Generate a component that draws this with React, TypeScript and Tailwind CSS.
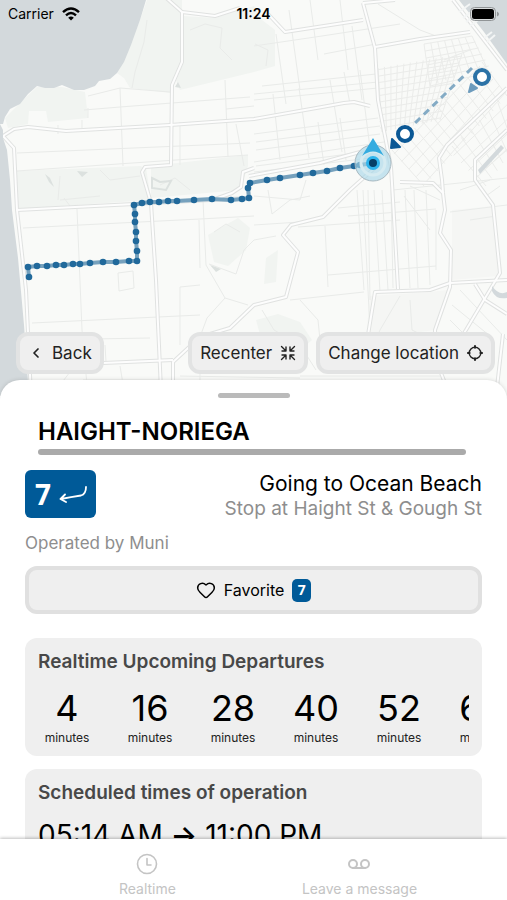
import { ChevronLeft, Heart, Voicemail } from 'lucide-react';
import type { ReactNode } from 'react';

type Point = [number, number];

const DEPARTURES = [4, 16, 28, 40, 52, 64];

const STOPS: Point[] = [
    [29, 277], [28, 267], [37, 266], [47, 266], [56, 265], [64, 265], [73, 264], [80, 264], [90, 263],
    [103, 262], [116, 262], [129, 261], [137, 261], [137, 251], [136, 241], [136, 232], [135, 222],
    [135, 214], [134, 205], [142, 203], [150, 202], [159, 202], [168, 201], [177, 201], [194, 200],
    [212, 199], [231, 200], [242, 199], [249, 198], [248, 188], [250, 183], [267, 180], [280, 178],
    [300, 175], [313, 173], [327, 171], [340, 168], [354, 166], [360, 165], [373, 163],
];

const PARKS = [
    'M147 0H182V62L172 85L171 93L130 88L124 78L117 73L128 50L140 20Z',
    'M184 16L215 18L254 6V72L180 90L176 80L184 62Z',
    'M254 6L262 20L275 30L275 66L254 72Z',
    'M5 118L20 103L37 87L62 87L85 92L88 118L48 122L46 111L29 111L28 124L8 128Z',
    'M17 171L140 166L146 168L151 200L17 209Z',
    'M151 166L248 155L248 166L240 190L151 198Z',
    'M208 235L238 218L250 228L246 250L228 266L214 262Z',
    'M256 320L278 314L300 322L312 340L300 350L262 342Z',
    'M266 258L278 250L276 282L264 284Z',
];

const MAJOR_ROADS = [
    'M164 -4L182 12V62L172 85L171 165L145 167L142 172L151 203L156 280L161 390',
    'M182 12L215 16L240 8',
    'M3 136L14 129L28 127L66 131L170 125L254 119L322 107L344 103L354 102L370 106',
    'M3 136L14 148L17 210L26 290L31 396',
    'M17 210L75 207L134 204L248 198',
    'M254 168L243 172L241 187L232 193L215 199',
    'M363 3L375 48L378 100L391 167L393 200L398 289',
    'M268 14L285 32L363 20',
    'M363 3L395 0',
    'M375 47L420 39L470 32',
    'M453 0L507 70',
    'M507 88L447 145L439 158L442 180L443 193L445 210L440 233L451 250L450 287L435 330L436 360L450 396',
    'M507 130L475 160L475 180L493 205L500 273L466 330L440 370',
    'M368 335L375 292L430 290L450 283L507 280',
    'M378 165L350 190L323 217L291 225L283 235L298 252L286 297L254 305L230 328L200 337L173 362L173 390',
    'M30 366L103 363L173 360',
    'M400 182L433 183L443 193',
    'M249 176L320 163L360 152',
    'M475 284L485 300L507 314',
    'M503 334L496 396',
];

const MINOR_ROADS = [
    'M120 88L123 166M84 110L120 107L250 97M17 153L250 143M58 125V134M82 120V128M88 108V118M225 80L228 157M236 124L244 166',
    'M147 20L144 42L135 72L132 88M226 109L254 106M180 122V165M88 96L120 88L170 92M17 171L248 155',
    'M23 228L80 225L200 219L254 216M77 209L82 330L88 396M32 323L200 315M118 273L133 271L134 288L119 291ZM203 200L206 265M199 220L200 268',
    'M206 265L225 298L207 318L200 337M180 345L180 287L200 285M225 298L248 305M209 264L236 274L244 250L254 240M60 385L70 372M32 340L150 338M83 380H160',
    'M289 10L300 90M310 0L318 60M340 0L348 70M322 36L400 24M324 54L376 44M378 4L420 30L436 36M254 46L322 36M276 34L286 104',
    'M273 94L280 160M299 88L309 158M254 94L378 82M254 100L378 88M262 86L376 74M330 80L342 152M360 70L370 148M352 26L362 100M344 72L350 104',
    'M254 134L378 118M256 142L380 126M256 150L380 134M254 162L384 142M256 166L380 150M254 172L370 158M340 118L346 160M318 122L324 165',
    'M357 190L364 290M363 190L370 330M368 190L370 300M374 190L380 292M382 190L388 290M391 190L393 288M405 190L410 288M414 190L418 288M426 190L430 285M436 210L436 270',
    'M298 227L400 220M328 275L436 266M348 216L436 209M290 300L364 292M254 225L300 222M325 226L328 287M300 300L318 320L320 340M338 208L400 202M276 236L254 240',
    'M393 190L507 178M450 212L507 205M410 300L412 330L424 336L420 350M452 305L490 336M460 290L507 340M450 320L480 350M400 296L380 330L372 350M388 360H440M300 376H440',
    'M254 196L300 200M268 190L272 214L290 200L310 196M300 200L306 180M262 310L274 330L300 345L316 370M180 376L300 378M105 345L106 362M120 366L124 390M200 366V390',
    'M444 60L470 50M404 196L430 230M410 186L440 200M460 190L490 180M470 220L496 216M486 196L500 186M507 150L486 168',
];

const PARK_TRAILS = [
    'M190 30L205 24L222 28L220 48L232 60M60 176L58 200M60 200L100 196M100 170L110 180L140 176M160 185L175 178L190 190',
    'M255 44L268 50L266 66M64 198L70 206M214 232L226 224L240 232',
];

// Evenly spaced street lines between two edges of a block
function streets(a: Point, b: Point, c: Point, d: Point, count: number) {
    let path = '';
    for (let i = 0; i <= count; i++) {
        const t = i / count;
        const x1 = a[0] + (b[0] - a[0]) * t;
        const y1 = a[1] + (b[1] - a[1]) * t;
        const x2 = c[0] + (d[0] - c[0]) * t;
        const y2 = c[1] + (d[1] - c[1]) * t;
        path += `M${x1} ${y1}L${x2} ${y2}`;
    }
    return path;
}

const DOWNTOWN = [
    streets([376, 70], [380, 128], [462, 56], [440, 118], 9),
    streets([378, 68], [462, 54], [382, 132], [440, 120], 13),
    streets([424, 44], [472, 36], [430, 86], [486, 66], 7),
    streets([424, 44], [430, 86], [472, 36], [492, 72], 6),
];

const SOMA = [
    streets([392, 150], [482, 62], [424, 186], [507, 96], 12),
    streets([394, 154], [424, 184], [480, 66], [506, 92], 4),
    streets([452, 146], [507, 94], [486, 186], [520, 140], 6),
    streets([446, 148], [476, 178], [507, 90], [540, 118], 4),
];

const ROUTE = STOPS.map((p) => p.join(',')).join(' ');

function CityMap() {
    return (
        <svg className="absolute inset-0 h-full w-full" viewBox="0 0 507 396" preserveAspectRatio="xMidYMin slice" aria-hidden="true">
            <rect width="507" height="396" fill="#f9faf8" />
            {PARKS.map((d) => <path key={d} d={d} fill="#f1f4f1" />)}
            <path d="M370 296L430 292L448 290L434 330L366 340ZM452 210L495 206L498 276L452 280Z" fill="#f5f6f4" />
            <g fill="none" stroke="#e9ebe9" strokeWidth="1">
                {PARK_TRAILS.map((d) => <path key={d} d={d} />)}
                {MINOR_ROADS.map((d) => <path key={d} d={d} />)}
            </g>
            <g fill="none" stroke="#ebecea" strokeWidth="1">
                {DOWNTOWN.map((d) => <path key={d} d={d} />)}
                {SOMA.map((d) => <path key={d} d={d} />)}
            </g>
            <g fill="none" strokeLinejoin="round">
                {MAJOR_ROADS.map((d) => <path key={d} d={d} stroke="#e0e2e1" strokeWidth="4" />)}
                {MAJOR_ROADS.map((d) => <path key={d} d={d} stroke="#fdfdfd" strokeWidth="2" />)}
            </g>
            <g fill="#d3d9dc">
                <path d="M0 0H146L140 20L131 45L124 62L117 73L110 79L99 81L95 86L84 90L74 90L62 85L54 88L45 88L37 86L28 94L20 104L10 109L5 117L3 124L0 124Z" />
                <path d="M0 124L3 130L3 138L7 150L10 180L12 210L18 258L24 325L29 396H0Z" />
                <path d="M459 0L484 32L507 64V0Z" />
                <path d="M77 171L88 172L82 177ZM45 174L50 178L54 187L49 182ZM175 87L178 82L181 88Z" fill="#dce1df" />
                <path d="M152 178L160 182L171 181L166 190L152 188Z" fill="none" stroke="#dce1df" strokeWidth="2" />
                <path d="M210 265L221 269L216 272Z" fill="#dce1df" />
                <path d="M478 170L501 145L504 148L480 174Z" />
                <path d="M492 286Q499 296 507 292V298Q496 300 492 291Z" />
            </g>
            <path d="M459 12L470 4M463 18L474 10M470 26L481 18M484 38L492 32M487 42L495 35M466 22L476 14" stroke="#f3f5f5" strokeWidth="2" />

            <polyline points={ROUTE} fill="none" stroke="#76a1bd" strokeWidth="4" strokeLinejoin="round" />
            {STOPS.map(([x, y]) => <circle key={`${x}-${y}`} cx={x} cy={y} r="3.3" fill="#21699b" />)}

            <path d="M472 68L414 124" stroke="#84abc5" strokeWidth="3" strokeDasharray="7 5" />
            <path d="M471 84L477 88L469 92Z" fill="#6d9cbd" stroke="#6d9cbd" strokeWidth="2" strokeLinejoin="round" />
            <circle cx="482" cy="77" r="7" fill="#fff" stroke="#2b72a6" strokeWidth="4" />

            <circle cx="373" cy="163" r="18" fill="#a9d7e8" fillOpacity=".65" stroke="#a8b9c1" strokeWidth="1" />
            <circle cx="373" cy="163" r="12" fill="none" stroke="#d6ebf1" strokeWidth="3" />
            <path d="M373 138L384 156Q373 147 362 156Z" fill="#35ace0" />
            <circle cx="373" cy="163" r="7" fill="#2fb4ec" />
            <circle cx="373" cy="163" r="4" fill="#063f66" />
            <path d="M392 139L400 147L391 148Z" fill="#0b5895" stroke="#0b5895" strokeWidth="2" strokeLinejoin="round" />
            <circle cx="405" cy="134" r="7" fill="#fff" stroke="#0b5895" strokeWidth="4" />
        </svg>
    );
}

function StatusBar() {
    return (
        <div className="grid grid-cols-3 items-center px-2 pt-1 text-sm leading-5 text-black">
            <div className="flex items-center gap-2">
                <span>Carrier</span>
                <svg className="h-3.5 w-[18px]" viewBox="0 0 18 14" fill="none" stroke="#000" strokeWidth="2.4" aria-hidden="true">
                    <path d="M1 5.2Q9 -2.2 17 5.2M4 8.4Q9 3.8 14 8.4" />
                    <path d="M6.2 10.7Q9 8.2 11.8 10.7L9 13.6Z" fill="#000" stroke="none" />
                </svg>
            </div>
            <span className="text-center font-semibold">11:24</span>
            <svg className="h-3.5 w-[29px] justify-self-end" viewBox="0 0 29 14" aria-hidden="true">
                <rect x=".5" y=".5" width="25" height="13" rx="4" fill="#d9dcdd" stroke="#909496" />
                <rect x="2" y="2" width="22" height="10" rx="2.5" fill="#000" />
                <path d="M27 4.5Q29 5.5 29 7T27 9.5Z" fill="#909496" />
            </svg>
        </div>
    );
}

function MapButton({ children }: { children: ReactNode }) {
    return (
        <button type="button" className="flex h-[42px] items-center gap-2 rounded-xl border-4 border-[#e2e3e3] bg-[#efefef] px-2 text-[17px] leading-6 whitespace-nowrap text-[#222]">
            {children}
        </button>
    );
}

function RecenterIcon() {
    return (
        <svg className="size-4" viewBox="0 0 16 16" fill="none" stroke="#222" strokeWidth="1.4" strokeLinecap="round" strokeLinejoin="round" aria-hidden="true">
            <path d="M1.5 1.5L6 6M6 2V6H2M14.5 1.5L10 6M10 2V6H14M1.5 14.5L6 10M6 14V10H2M14.5 14.5L10 10M10 14V10H14" />
        </svg>
    );
}

function LocationIcon() {
    return (
        <svg className="size-4" viewBox="0 0 16 16" fill="none" stroke="#222" strokeWidth="1.4" aria-hidden="true">
            <circle cx="8" cy="8" r="5.8" />
            <path d="M8 .2V3.4M8 12.6V15.8M.2 8H3.4M12.6 8H15.8" strokeWidth="2" />
        </svg>
    );
}

function Departure({ minutes }: { minutes: number }) {
    return (
        <li className="flex w-[58px] shrink-0 flex-col items-center">
            <span className="text-4xl leading-[44px] text-black">{minutes}</span>
            <span className="text-xs leading-4 text-[#222]">minutes</span>
        </li>
    );
}

export default function App() {
    return (
        <main className="flex h-screen flex-col overflow-hidden bg-white font-['Inter',sans-serif]">
            <section className="relative h-[44vh] shrink-0">
                <CityMap />
                <div className="relative flex h-full flex-col justify-between pb-[22px]">
                    <StatusBar />
                    <div className="flex items-center gap-2 pr-3 pl-4">
                        <MapButton>
                            <ChevronLeft className="h-5 w-4" strokeWidth={2.6} />
                            Back
                        </MapButton>
                        <div className="ml-auto flex gap-2">
                            <MapButton>
                                Recenter
                                <RecenterIcon />
                            </MapButton>
                            <MapButton>
                                Change location
                                <LocationIcon />
                            </MapButton>
                        </div>
                    </div>
                </div>
            </section>

            <section className="relative -mt-4 flex min-h-0 flex-1 flex-col overflow-hidden rounded-t-[20px] bg-white shadow-[0_0_4px_rgba(0,0,0,0.15)]">
                <div className="mx-auto mt-[13px] h-[5px] w-[72px] shrink-0 rounded-full bg-[#bababa]" />
                <h1 className="mx-[38px] mt-5 text-2xl leading-7 font-semibold text-black">HAIGHT-NORIEGA</h1>
                <div className="mt-[3px] mr-[41px] ml-[38px] h-[6px] shrink-0 rounded-full bg-[#aaa]" />

                <div className="min-h-0 flex-1 overflow-y-auto px-[25px] pt-[15px] [scrollbar-width:none]">
                    <div className="flex items-start justify-between">
                        <div className="flex h-12 w-[71px] items-center gap-2 rounded-md bg-[#005a98] pl-2.5">
                            <span className="font-['Open_Sans',sans-serif] text-[28px] leading-10 font-bold text-white">7</span>
                            <svg className="h-[17px] w-7" viewBox="0 0 28 17" fill="none" stroke="#fff" strokeWidth="1.8" strokeLinecap="round" strokeLinejoin="round" aria-hidden="true">
                                <path d="M27 1Q27 8 22 9.5Q12 11 2 13M6 8.5L1.5 13L7 16" />
                            </svg>
                        </div>
                        <div className="pt-px text-right">
                            <p className="text-[21px] leading-[26px] text-black">Going to Ocean Beach</p>
                            <p className="text-[19px] leading-6 text-[#8e8e8e]">Stop at Haight St &amp; Gough St</p>
                        </div>
                    </div>
                    <p className="mt-2.5 text-[17px] leading-6 text-[#8e8e8e]">Operated by Muni</p>

                    <button type="button" className="mt-[11px] flex h-12 w-full items-center justify-center gap-2 rounded-xl border-4 border-[#e0e0e0] bg-[#efefef] text-base text-black">
                        <Heart className="size-5" strokeWidth={1.8} />
                        Favorite
                        <span className="flex h-[23px] w-[19px] items-center justify-center rounded-[5px] bg-[#005a98] font-['Open_Sans',sans-serif] text-sm font-bold text-white">7</span>
                    </button>

                    <section className="mt-6 rounded-xl bg-[#efefef] px-[13px] pt-3 pb-2.5">
                        <h2 className="text-[19px] leading-6 font-semibold text-[#484848]">Realtime Upcoming Departures</h2>
                        <ul className="mt-3 flex gap-[25px] overflow-x-auto [scrollbar-width:none]">
                            {DEPARTURES.map((minutes) => <Departure key={minutes} minutes={minutes} />)}
                        </ul>
                    </section>

                    <section className="mt-[13px] rounded-xl bg-[#efefef] px-[13px] py-3">
                        <h2 className="text-[19px] leading-6 font-semibold text-[#484848]">Scheduled times of operation</h2>
                        <p className="mt-3 text-[28px] leading-9 whitespace-nowrap text-black">
                            05:14 AM <span className="font-semibold">→</span> 11:00 PM
                        </p>
                    </section>
                </div>
            </section>

            <nav className="relative flex h-[61px] shrink-0 justify-center gap-[126px] bg-white pt-3.5 pl-[29px] text-sm leading-5 text-[#c4c4c4] shadow-[0_-1px_3px_rgba(0,0,0,0.25)]">
                <a href="#realtime" className="flex flex-col items-center gap-1">
                    <svg className="size-[22px]" viewBox="0 0 22 22" fill="none" stroke="currentColor" strokeWidth="1.6" strokeLinecap="round" strokeLinejoin="round" aria-hidden="true">
                        <circle cx="11" cy="11" r="9.5" />
                        <path d="M11 5.5V12H15" />
                    </svg>
                    Realtime
                </a>
                <a href="#message" className="flex flex-col items-center gap-1">
                    <Voicemail className="size-6 -my-px" strokeWidth={2} />
                    Leave a message
                </a>
            </nav>
        </main>
    );
}
